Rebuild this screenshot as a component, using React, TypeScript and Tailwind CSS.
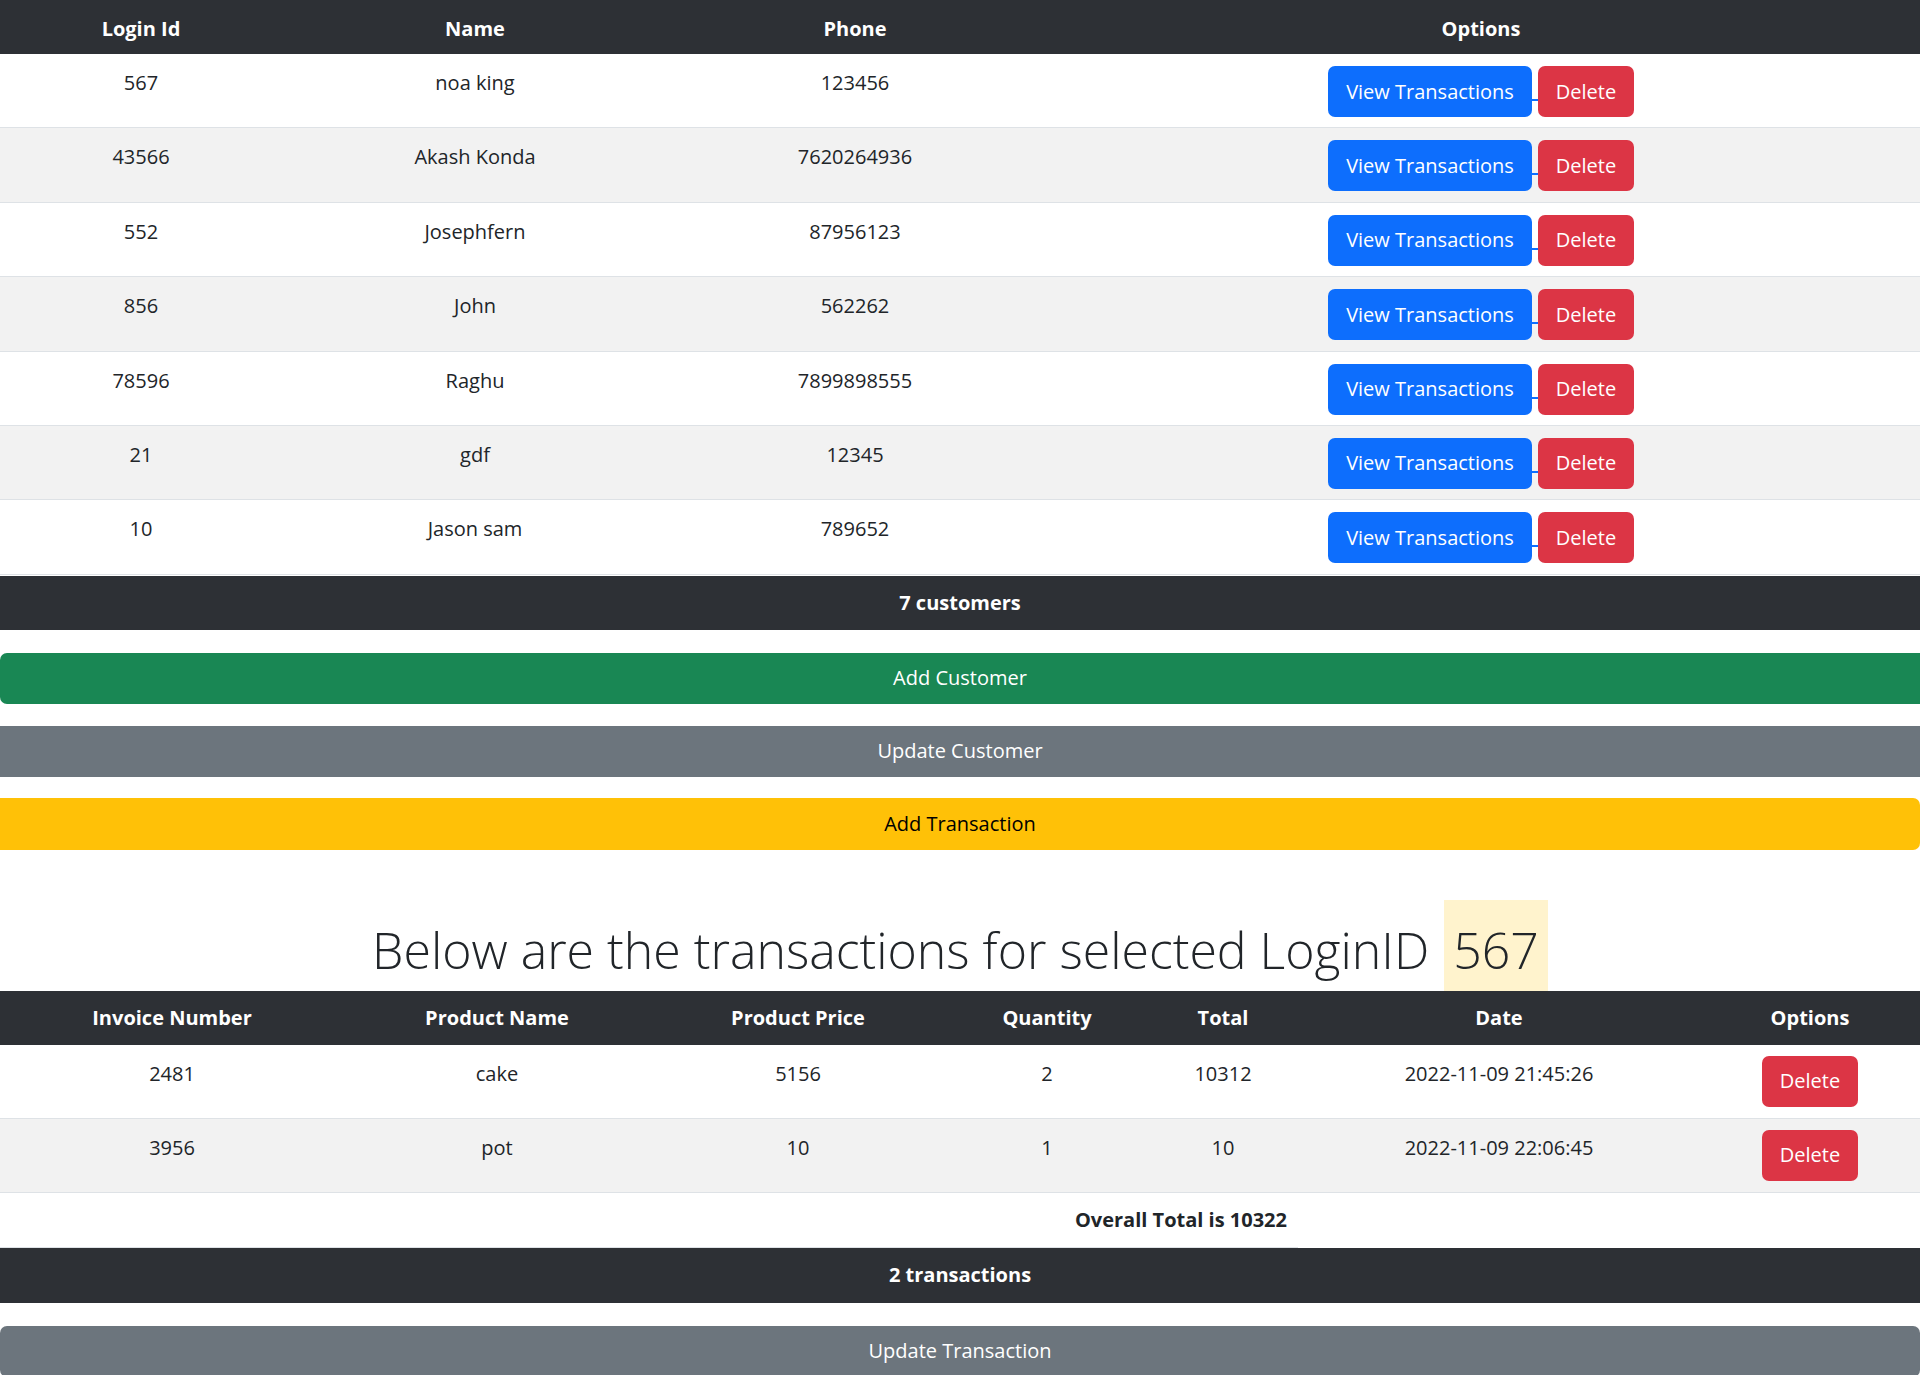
const customers = [
  { id: "567", name: "noa king", phone: "123456" },
  { id: "43566", name: "Akash Konda", phone: "7620264936" },
  { id: "552", name: "Josephfern", phone: "87956123" },
  { id: "856", name: "John", phone: "562262" },
  { id: "78596", name: "Raghu", phone: "7899898555" },
  { id: "21", name: "gdf", phone: "12345" },
  { id: "10", name: "Jason sam", phone: "789652" },
];

const transactions = [
  { invoice: "2481", product: "cake", price: "5156", qty: "2", total: "10312", date: "2022-11-09 21:45:26" },
  { invoice: "3956", product: "pot", price: "10", qty: "1", total: "10", date: "2022-11-09 22:06:45" },
];

const custCols = "grid grid-cols-[282px_386px_374px_1fr]";
const txCols = "grid grid-cols-[344px_306px_296px_202px_150px_402px_220px]";

function CustomerTable() {
  return (
    <div>
      <div className={`${custCols} h-[54px] bg-[#2d3035] text-white font-bold`}>
        <div className="pt-[14px] text-center">Login Id</div>
        <div className="pt-[14px] text-center">Name</div>
        <div className="pt-[14px] text-center">Phone</div>
        <div className="pt-[14px] text-center">Options</div>
      </div>
      {customers.map((c, i) => (
        <div
          key={c.id}
          className={`${custCols} h-[74.4px] border-b border-[#dee2e6] ${i % 2 === 1 ? "bg-[#f2f2f2]" : "bg-white"}`}
        >
          <div className="pt-[14px] text-center">{c.id}</div>
          <div className="pt-[14px] text-center">{c.name}</div>
          <div className="pt-[14px] text-center">{c.phone}</div>
          <div className="flex justify-center pt-[12px]">
            <button className="h-[51px] w-[204px] rounded-[7px] bg-[#0d6efd] text-white">View Transactions</button>
            <span className="mt-[33px] h-[2px] w-[6px] bg-[#0d6efd]" />
            <button className="h-[51px] w-[96px] rounded-[7px] bg-[#dc3545] text-white">Delete</button>
          </div>
        </div>
      ))}
      <div className="mt-px flex h-[54px] items-center justify-center bg-[#2d3035] font-bold text-white">
        7 customers
      </div>
    </div>
  );
}

function TransactionTable() {
  return (
    <div>
      <div className={`${txCols} h-[54px] bg-[#2d3035] text-white font-bold`}>
        {["Invoice Number", "Product Name", "Product Price", "Quantity", "Total", "Date", "Options"].map((h) => (
          <div key={h} className="pt-[12px] text-center">{h}</div>
        ))}
      </div>
      {transactions.map((t, i) => (
        <div
          key={t.invoice}
          className={`${txCols} h-[74px] border-b border-[#dee2e6] ${i % 2 === 1 ? "bg-[#f2f2f2]" : "bg-white"}`}
        >
          <div className="pt-[14px] text-center">{t.invoice}</div>
          <div className="pt-[14px] text-center">{t.product}</div>
          <div className="pt-[14px] text-center">{t.price}</div>
          <div className="pt-[14px] text-center">{t.qty}</div>
          <div className="pt-[14px] text-center">{t.total}</div>
          <div className="pt-[14px] text-center">{t.date}</div>
          <div className="flex justify-center pt-[11px]">
            <button className="h-[51px] w-[96px] rounded-[7px] bg-[#dc3545] text-white">Delete</button>
          </div>
        </div>
      ))}
      <div className="flex h-[55px]">
        <div className="w-[1298px] border-b border-[#dee2e6] pr-[11px] pt-[12px] text-right font-bold">
          Overall Total is 10322
        </div>
      </div>
      <div className="flex h-[55px] items-center justify-center bg-[#2d3035] font-bold text-white">
        2 transactions
      </div>
    </div>
  );
}

export default function App() {
  return (
    <div className="w-[1920px] bg-white font-['Open_Sans',sans-serif] text-[20px] leading-[30px] text-[#212529]">
      <CustomerTable />

      <button className="mt-[23px] block h-[51px] w-full rounded-l-[7px] bg-[#198754] text-white">Add Customer</button>
      <button className="mt-[22px] block h-[51px] w-full bg-[#6c757d] text-white">Update Customer</button>
      <button className="mt-[21px] block h-[52px] w-full rounded-r-[7px] bg-[#ffc107] text-black">Add Transaction</button>

      <div className="flex h-[141px] items-end justify-center">
        <h2 className="flex items-baseline text-[50px] font-light leading-[50px]">
          <span>Below are the transactions for selected LoginID</span>
          <mark className="ml-[15px] inline-block bg-[#fff3cd] px-[9px] pb-[16px] pt-[25px] text-[#212529]">567</mark>
        </h2>
      </div>

      <TransactionTable />

      <button className="mt-[23px] block h-[51px] w-full rounded-[7px] bg-[#6c757d] text-white">Update Transaction</button>
    </div>
  );
}
